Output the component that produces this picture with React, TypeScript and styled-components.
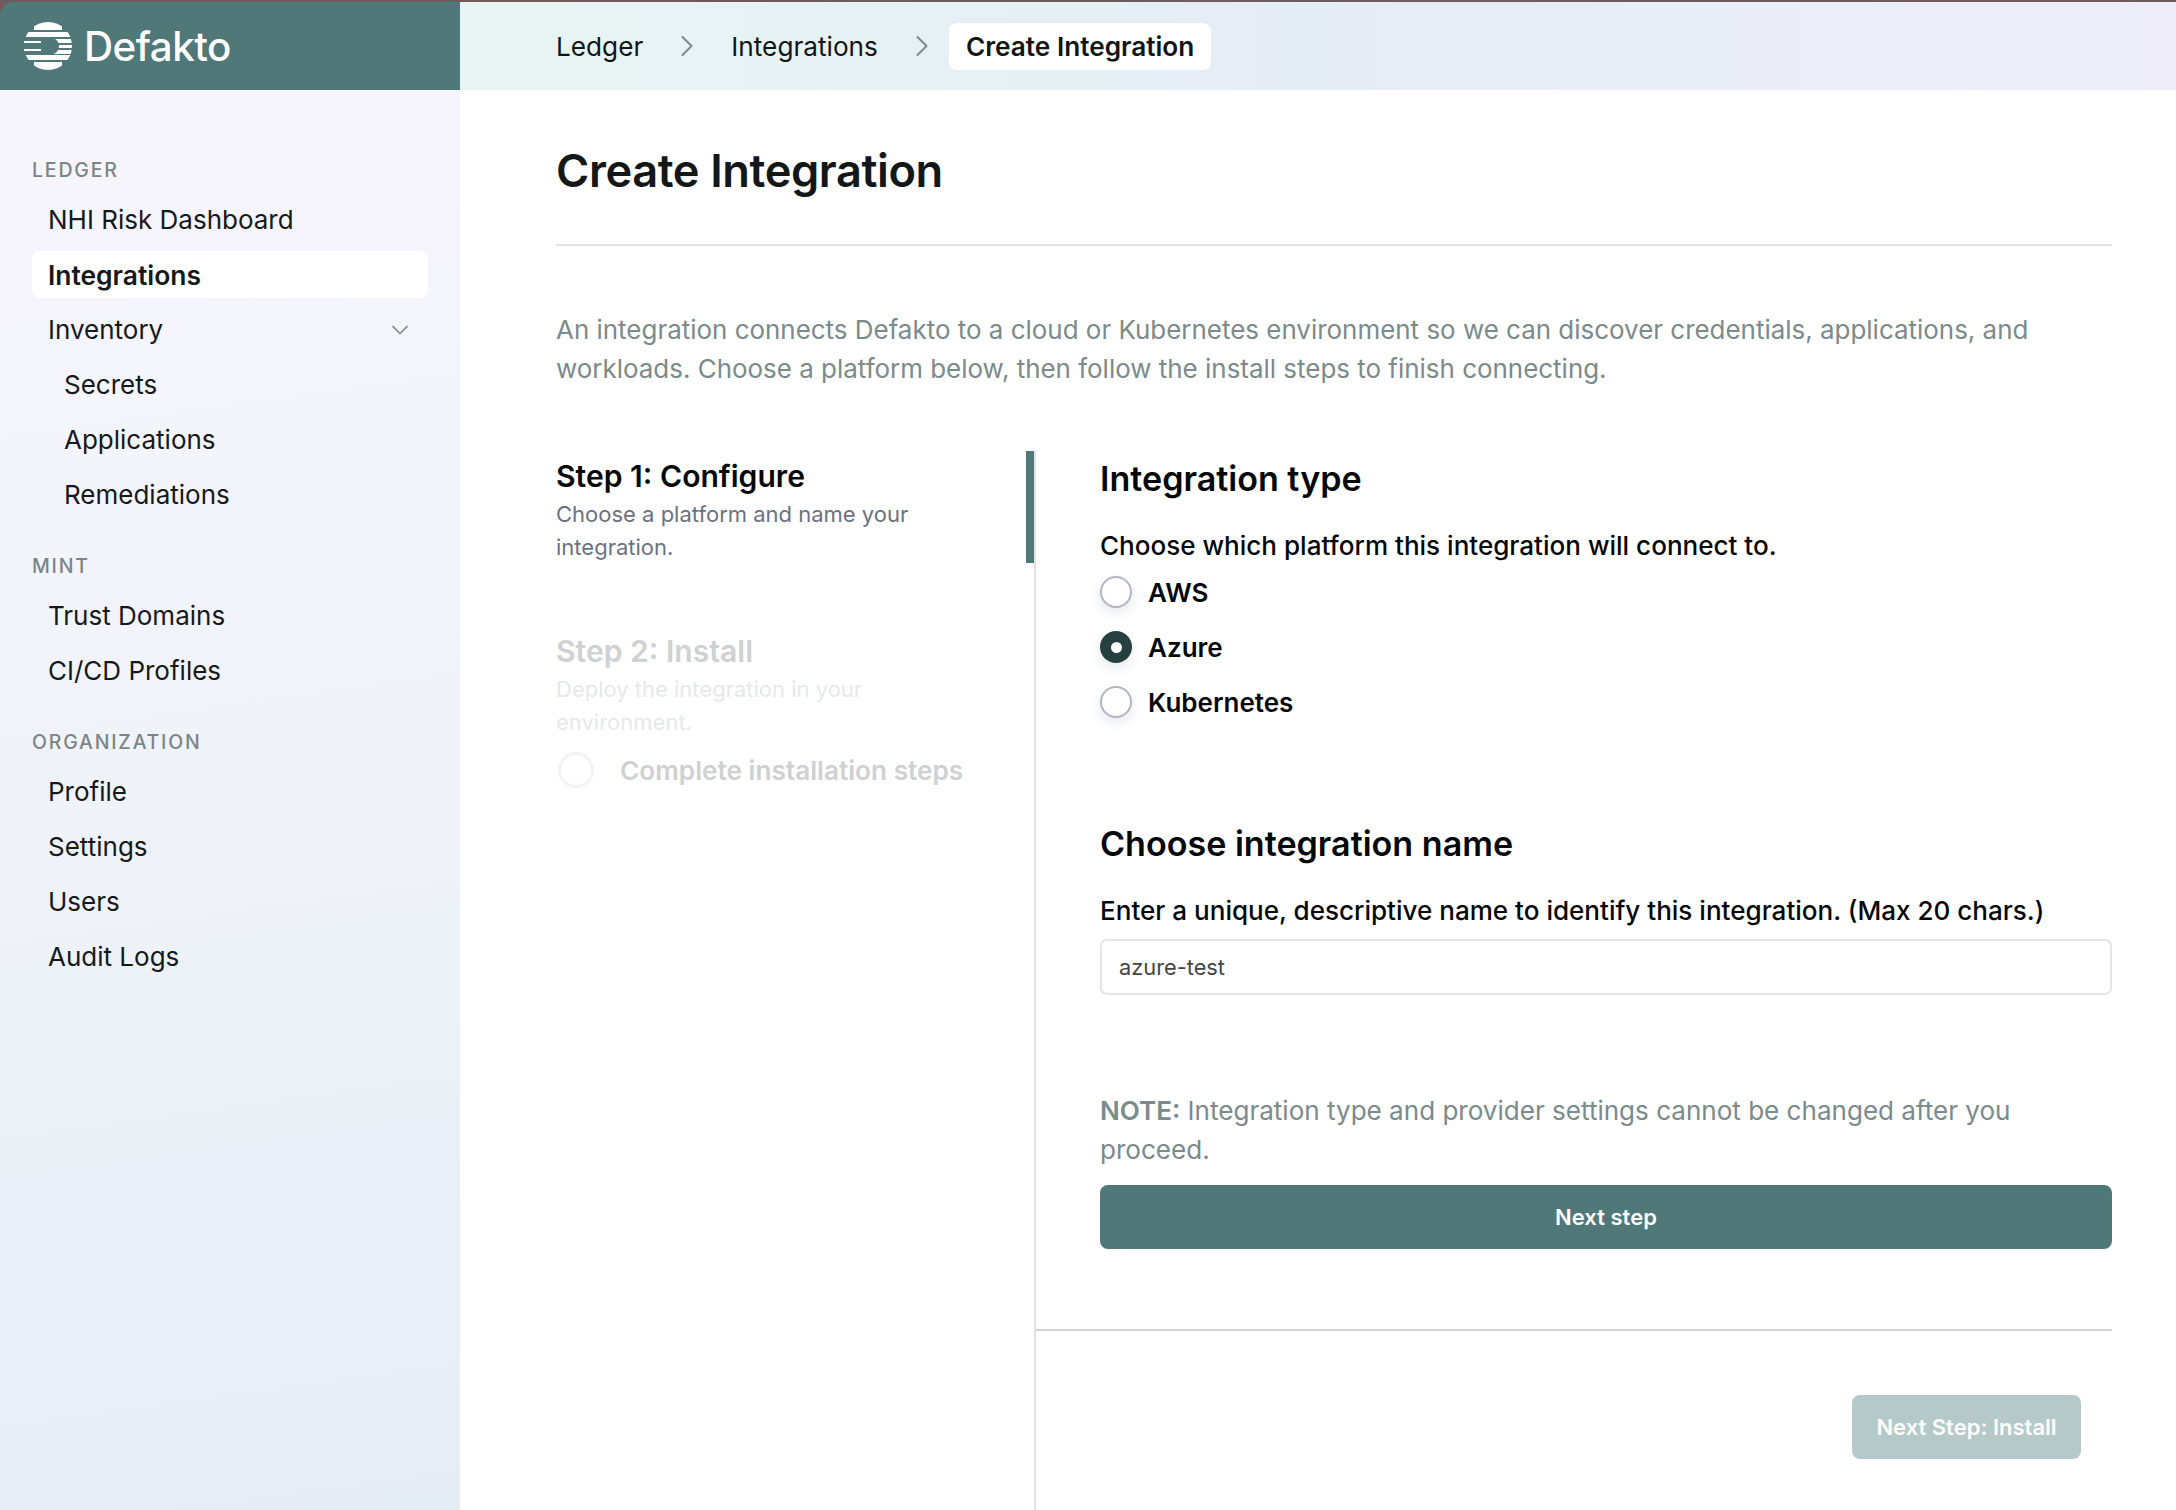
import React from "react";
import styled, { createGlobalStyle } from "styled-components";
import { ChevronDown, ChevronRight } from "lucide-react";

const GlobalStyle = createGlobalStyle`
  html, body {
    margin: 0;
    padding: 0;
    background: #6f5a5e;
  }
  * {
    box-sizing: border-box;
  }
  body {
    font-family: Inter, "Liberation Sans", sans-serif;
    color: #0b0d0e;
  }
`;

const Page = styled.div`
  display: flex;
  flex-direction: column;
  height: 1510px;
  overflow: hidden;
  padding-top: 2px;
`;

const Header = styled.header`
  display: flex;
  height: 88px;
  flex-shrink: 0;
`;

const Brand = styled.div`
  display: flex;
  align-items: center;
  gap: 12px;
  width: 460px;
  padding-left: 24px;
  background: #507878;
  border-radius: 14px 0 0 0;
`;

const BrandName = styled.span`
  font-size: 40.3px;
  font-weight: 500;
  letter-spacing: -0.5px;
  color: #fff;
`;

const Breadcrumbs = styled.nav`
  flex: 1;
  display: flex;
  align-items: center;
  padding-left: 96px;
  background: linear-gradient(90deg, #e8f5f4 0%, #e5edf4 50%, #eeedf9 100%);
`;

const Crumb = styled.span<{ $active?: boolean }>`
  display: flex;
  align-items: center;
  height: 47px;
  font-size: 26.2px;
  font-weight: ${(p) => (p.$active ? 600 : 400)};
  color: #111516;
  ${(p) =>
    p.$active &&
    `
    margin-left: -17px;
    padding: 0 17px;
    background: #fff;
    border-radius: 8px;
  `}
`;

const CrumbArrow = styled(ChevronRight)`
  width: 36px;
  height: 36px;
  margin: 0 26px;
  color: #7f8a8a;
  stroke-width: 1.4;
`;

const Body = styled.div`
  flex: 1;
  display: flex;
  min-height: 0;
  background: #fff;
`;

const Sidebar = styled.aside`
  width: 460px;
  flex-shrink: 0;
  display: flex;
  flex-direction: column;
  gap: 36px;
  padding: 68px 32px 0;
  background: linear-gradient(172deg, #f7f5fd 0%, #f3f4fb 35%, #e5edf4 100%);
`;

const NavSection = styled.section`
  display: flex;
  flex-direction: column;
`;

const NavLabel = styled.div`
  height: 24px;
  margin-bottom: 14px;
  font-size: 19.5px;
  line-height: 24px;
  font-weight: 500;
  letter-spacing: 1.8px;
  color: #7a8587;
`;

const NavList = styled.div`
  display: flex;
  flex-direction: column;
  gap: 8px;
`;

const NavItem = styled.div<{ $active?: boolean; $sub?: boolean }>`
  display: flex;
  align-items: center;
  justify-content: space-between;
  height: 47px;
  padding: 0 16px 0 ${(p) => (p.$sub ? 32 : 16)}px;
  font-size: ${(p) => (p.$active ? 26.4 : 26)}px;
  font-weight: ${(p) => (p.$active ? 600 : 400)};
  color: #15191a;
  background: ${(p) => (p.$active ? "#fff" : "transparent")};
  border-radius: 8px;
`;

const NavChevron = styled(ChevronDown)`
  width: 28px;
  height: 28px;
  margin-right: -2px;
  color: #7f8a8a;
  stroke-width: 1.5;
`;

const Main = styled.main`
  flex: 1;
  display: flex;
  flex-direction: column;
  min-width: 0;
  padding: 56px 64px 0 96px;
`;

const Title = styled.h1`
  margin: 0;
  padding-bottom: 48px;
  border-bottom: 2px solid #e2e2e2;
  font-size: 45.2px;
  line-height: 50px;
  font-weight: 600;
  letter-spacing: -0.4px;
  color: #131718;
`;

const Intro = styled.p`
  margin: 64px 0 63px;
  font-size: 25.95px;
  line-height: 39px;
  font-weight: 400;
  color: #7b8a8a;
`;

const Columns = styled.div`
  flex: 1;
  display: flex;
  min-height: 0;
`;

const StepsPane = styled.div`
  width: 480px;
  flex-shrink: 0;
  border-right: 2px solid #e2e2e2;
`;

const ActiveStep = styled.div`
  height: 112px;
  padding-top: 8px;
  border-right: 8px solid #507878;
`;

const PendingStep = styled.div`
  margin-top: 71px;
`;

const StepTitle = styled.h3<{ $muted?: boolean }>`
  margin: 0;
  font-size: 30.1px;
  line-height: 34px;
  font-weight: 600;
  color: ${(p) => (p.$muted ? "#d0d1d3" : "#050708")};
`;

const StepText = styled.p<{ $muted?: boolean }>`
  margin: 5px 0 0;
  font-size: 22px;
  line-height: 33px;
  font-weight: 400;
  color: ${(p) => (p.$muted ? "#e7e8ea" : "#6b7280")};
  width: 400px;
`;

const TaskRow = styled.div`
  display: flex;
  align-items: center;
  gap: 26px;
  margin-top: 13px;
  padding-left: 2px;
`;

const TaskCircle = styled.span`
  width: 36px;
  height: 36px;
  border: 3px solid #f3f3f4;
  border-radius: 50%;
`;

const TaskLabel = styled.span`
  font-size: 26.2px;
  font-weight: 600;
  color: #cfd0d2;
`;

const RightPane = styled.div`
  flex: 1;
  display: flex;
  flex-direction: column;
  min-width: 0;
`;

const Form = styled.div`
  display: flex;
  flex-direction: column;
  padding: 10px 0 80px 64px;
  border-bottom: 2px solid #d2d2da;
`;

const SectionTitle = styled.h2<{ $spaced?: boolean }>`
  margin: ${(p) => (p.$spaced ? "108px" : "0")} 0 0;
  font-size: 34.1px;
  line-height: 36px;
  font-weight: 600;
  color: #050708;
`;

const FieldLabel = styled.div`
  margin-top: 32px;
  font-size: 26.05px;
  line-height: 34px;
  font-weight: 500;
  color: #050708;
`;

const RadioGroup = styled.div`
  display: flex;
  flex-direction: column;
  gap: 23px;
  margin-top: 13px;
`;

const RadioRow = styled.label`
  display: flex;
  align-items: center;
  gap: 16px;
  height: 32px;
  font-size: 26px;
  font-weight: 600;
  color: #050708;
`;

const Radio = styled.span<{ $checked?: boolean }>`
  display: flex;
  align-items: center;
  justify-content: center;
  width: 32px;
  height: 32px;
  border-radius: 50%;
  background: ${(p) => (p.$checked ? "#263f3f" : "#fff")};
  border: ${(p) => (p.$checked ? "none" : "2px solid #b2b5c2")};
  box-shadow: 0 5px 12px rgba(110, 120, 150, 0.16);
  &::after {
    content: "";
    display: ${(p) => (p.$checked ? "block" : "none")};
    width: 11px;
    height: 11px;
    border-radius: 50%;
    background: #fff;
  }
`;

const TextField = styled.div`
  display: flex;
  align-items: center;
  height: 56px;
  margin-top: 11px;
  padding: 0 17px;
  border: 2px solid #e3e5e8;
  border-radius: 7px;
  font-size: 21.8px;
  color: #3f4648;
`;

const Note = styled.p`
  margin: 96px 0 0;
  font-size: 26.05px;
  line-height: 39px;
  font-weight: 400;
  color: #7b8a8a;
  b {
    font-weight: 600;
  }
`;

const PrimaryButton = styled.button`
  height: 64px;
  margin-top: 16px;
  border: none;
  border-radius: 8px;
  background: #507878;
  color: #fff;
  font-family: inherit;
  font-size: 22px;
  font-weight: 600;
`;

const Footer = styled.div`
  display: flex;
  justify-content: flex-end;
  padding: 64px 31px 0 0;
`;

const DisabledButton = styled.button`
  height: 64px;
  width: 229px;
  border: none;
  border-radius: 8px;
  background: #b5c9c8;
  color: #fff;
  font-family: inherit;
  font-size: 22px;
  font-weight: 600;
`;

const LogoMark = () => (
  <svg width="48" height="48" viewBox="0 0 48 48" fill="#fff">
    <defs>
      <clipPath id="logo-disc">
        <circle cx="24" cy="24" r="24" />
      </clipPath>
    </defs>
    <g clipPath="url(#logo-disc)">
      <rect x="10" y="0" width="28" height="8" />
      <rect x="0" y="10" width="48" height="5" />
      <rect x="0" y="17" width="48" height="4" />
      <rect x="0" y="23" width="48" height="3" />
      <rect x="0" y="28" width="48" height="4" />
      <rect x="0" y="33" width="48" height="5" />
      <rect x="10" y="40" width="28" height="8" />
    </g>
    <path d="M-1 15H24C31 15 35 19 35 24C35 29 31 33 24 33H-1Z" fill="#507878" />
    <rect x="0" y="19" width="17" height="2" />
    <rect x="0" y="27" width="17" height="2" />
  </svg>
);

const nav = [
  {
    label: "LEDGER",
    items: [
      { name: "NHI Risk Dashboard" },
      { name: "Integrations", active: true },
      { name: "Inventory", open: true },
      { name: "Secrets", sub: true },
      { name: "Applications", sub: true },
      { name: "Remediations", sub: true },
    ],
  },
  {
    label: "MINT",
    items: [{ name: "Trust Domains" }, { name: "CI/CD Profiles" }],
  },
  {
    label: "ORGANIZATION",
    items: [
      { name: "Profile" },
      { name: "Settings" },
      { name: "Users" },
      { name: "Audit Logs" },
    ],
  },
] as {
  label: string;
  items: { name: string; active?: boolean; open?: boolean; sub?: boolean }[];
}[];

export default function App() {
  return (
    <Page>
      <GlobalStyle />
      <Header>
        <Brand>
          <LogoMark />
          <BrandName>Defakto</BrandName>
        </Brand>
        <Breadcrumbs>
          <Crumb>Ledger</Crumb>
          <CrumbArrow />
          <Crumb>Integrations</Crumb>
          <CrumbArrow />
          <Crumb $active>Create Integration</Crumb>
        </Breadcrumbs>
      </Header>
      <Body>
        <Sidebar>
          {nav.map((section) => (
            <NavSection key={section.label}>
              <NavLabel>{section.label}</NavLabel>
              <NavList>
                {section.items.map((item) => (
                  <NavItem key={item.name} $active={item.active} $sub={item.sub}>
                    {item.name}
                    {item.open && <NavChevron />}
                  </NavItem>
                ))}
              </NavList>
            </NavSection>
          ))}
        </Sidebar>
        <Main>
          <Title>Create Integration</Title>
          <Intro>
            An integration connects Defakto to a cloud or Kubernetes environment so we can
            discover credentials, applications, and workloads. Choose a platform below, then
            follow the install steps to finish connecting.
          </Intro>
          <Columns>
            <StepsPane>
              <ActiveStep>
                <StepTitle>Step 1: Configure</StepTitle>
                <StepText>Choose a platform and name your integration.</StepText>
              </ActiveStep>
              <PendingStep>
                <StepTitle $muted>Step 2: Install</StepTitle>
                <StepText $muted>Deploy the integration in your environment.</StepText>
                <TaskRow>
                  <TaskCircle />
                  <TaskLabel>Complete installation steps</TaskLabel>
                </TaskRow>
              </PendingStep>
            </StepsPane>
            <RightPane>
              <Form>
                <SectionTitle>Integration type</SectionTitle>
                <FieldLabel>Choose which platform this integration will connect to.</FieldLabel>
                <RadioGroup>
                  <RadioRow>
                    <Radio />
                    AWS
                  </RadioRow>
                  <RadioRow>
                    <Radio $checked />
                    Azure
                  </RadioRow>
                  <RadioRow>
                    <Radio />
                    Kubernetes
                  </RadioRow>
                </RadioGroup>
                <SectionTitle $spaced>Choose integration name</SectionTitle>
                <FieldLabel>
                  Enter a unique, descriptive name to identify this integration. (Max 20 chars.)
                </FieldLabel>
                <TextField>azure-test</TextField>
                <Note>
                  <b>NOTE:</b> Integration type and provider settings cannot be changed after you
                  <br />
                  proceed.
                </Note>
                <PrimaryButton>Next step</PrimaryButton>
              </Form>
              <Footer>
                <DisabledButton>Next Step: Install</DisabledButton>
              </Footer>
            </RightPane>
          </Columns>
        </Main>
      </Body>
    </Page>
  );
}
